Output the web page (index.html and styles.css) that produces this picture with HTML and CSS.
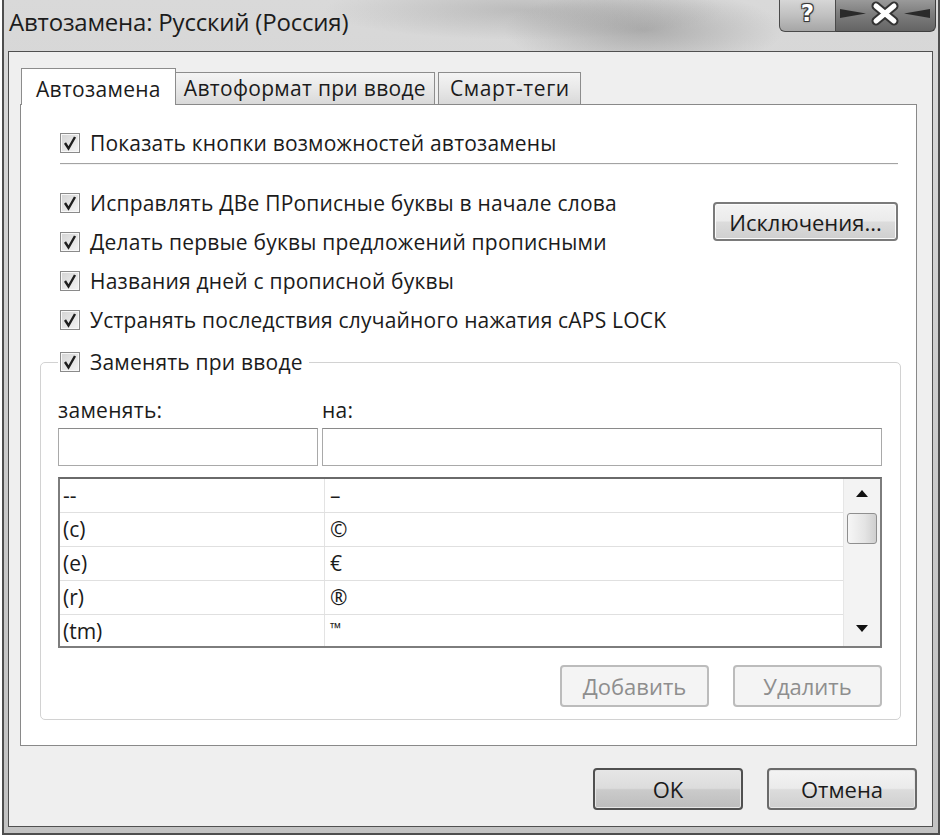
FILE: index.html
```html
<!DOCTYPE html>
<html lang="ru">
<head>
    <meta charset="UTF-8">
    <title>Автозамена: Русский (Россия)</title>
    <link rel="stylesheet" href="styles.css">
</head>
<body>
    <div class="window">
        <div class="titlebar">
            <div class="title">Автозамена: Русский (Россия)</div>
            <div class="caption">
                <div class="cap-help">?</div>
                <div class="cap-close">
                    <svg width="98" height="32" viewBox="0 0 98 32">
                        <polygon points="4,9 30,13.5 4,18" fill="#2a2a2a"/>
                        <polygon points="94,9 68,13.5 94,18" fill="#2a2a2a"/>
                        <path d="M40 6 L58 21 M58 6 L40 21" stroke="#333333" stroke-width="9" stroke-linecap="round"/>
                        <path d="M40 6 L58 21 M58 6 L40 21" stroke="#ffffff" stroke-width="5" stroke-linecap="round"/>
                    </svg>
                </div>
            </div>
        </div>

        <div class="client">
            <div class="tabs">
                <div class="tab active">Автозамена</div>
                <div class="tab">Автоформат при вводе</div>
                <div class="tab tab-gap">Смарт-теги</div>
            </div>

            <div class="panel">
                <div class="check row first">
                    <span class="box"><svg width="18" height="18" viewBox="0 0 18 18"><path d="M4 9 L7.5 14.5 L14 3" stroke="#1e1e1e" stroke-width="2.4" fill="none"/></svg></span>
                    Показать кнопки возможностей автозамены
                </div>
                <div class="sep"></div>

                <div class="opts">
                    <div class="opt-list">
                        <div class="check row">
                            <span class="box"><svg width="18" height="18" viewBox="0 0 18 18"><path d="M4 9 L7.5 14.5 L14 3" stroke="#1e1e1e" stroke-width="2.4" fill="none"/></svg></span>
                            Исправлять ДВе ПРописные буквы в начале слова
                        </div>
                        <div class="check row">
                            <span class="box"><svg width="18" height="18" viewBox="0 0 18 18"><path d="M4 9 L7.5 14.5 L14 3" stroke="#1e1e1e" stroke-width="2.4" fill="none"/></svg></span>
                            Делать первые буквы предложений прописными
                        </div>
                        <div class="check row">
                            <span class="box"><svg width="18" height="18" viewBox="0 0 18 18"><path d="M4 9 L7.5 14.5 L14 3" stroke="#1e1e1e" stroke-width="2.4" fill="none"/></svg></span>
                            Названия дней с прописной буквы
                        </div>
                        <div class="check row">
                            <span class="box"><svg width="18" height="18" viewBox="0 0 18 18"><path d="M4 9 L7.5 14.5 L14 3" stroke="#1e1e1e" stroke-width="2.4" fill="none"/></svg></span>
                            Устранять последствия случайного нажатия cAPS LOCK
                        </div>
                    </div>
                    <button class="btn btn-except">Исключения...</button>
                </div>

                <fieldset class="group">
                    <legend class="check legend">
                        <span class="box"><svg width="18" height="18" viewBox="0 0 18 18"><path d="M4 9 L7.5 14.5 L14 3" stroke="#1e1e1e" stroke-width="2.4" fill="none"/></svg></span>
                        Заменять при вводе
                    </legend>

                    <div class="fields">
                        <div class="field-label">заменять:</div>
                        <div class="field-label">на:</div>
                        <div class="input"></div>
                        <div class="input"></div>
                    </div>

                    <div class="list">
                        <div class="rows">
                            <div class="list-row"><span class="c1">--</span><span class="c2">–</span></div>
                            <div class="list-row"><span class="c1">(c)</span><span class="c2">©</span></div>
                            <div class="list-row"><span class="c1">(e)</span><span class="c2">€</span></div>
                            <div class="list-row"><span class="c1">(r)</span><span class="c2">®</span></div>
                            <div class="list-row"><span class="c1">(tm)</span><span class="c2 tm">™</span></div>
                        </div>
                        <div class="scrollbar">
                            <div class="arrow up"></div>
                            <div class="thumb"></div>
                            <div class="track"></div>
                            <div class="arrow down"></div>
                        </div>
                    </div>

                    <div class="list-btns">
                        <button class="btn disabled">Добавить</button>
                        <button class="btn disabled">Удалить</button>
                    </div>
                </fieldset>
            </div>

            <div class="dlg-btns">
                <button class="btn btn-main btn-ok">OK</button>
                <button class="btn btn-main">Отмена</button>
            </div>
        </div>
    </div>
</body>
</html>
```

FILE: styles.css
```css
body {
    margin: 0;
    background: #ffffff;
    font-family: 'Open Sans', 'Noto Sans', sans-serif;
    color: #1b1b1b;
}
.window {
    width: 938px;
    margin-left: 2px;
    box-sizing: border-box;
    border: 2px solid #4e4e4e;
    border-top: none;
    padding: 0 5px 6px 4px;
    background:
        radial-gradient(ellipse 140px 40px at 640px 30px, rgba(90, 90, 90, 0.35), transparent),
        radial-gradient(ellipse 200px 30px at 520px 10px, rgba(120, 120, 120, 0.3), transparent),
        linear-gradient(180deg, #d9d9d9 0%, #c9c9c9 60%, #c2c2c2 100%);
}
.titlebar {
    height: 51px;
    display: flex;
    justify-content: space-between;
    align-items: flex-start;
}
.title {
    font-size: 24px;
    line-height: 26px;
    padding: 9px 0 0 1px;
    color: #1c1c1c;
    letter-spacing: -0.2px;
}
.caption {
    display: flex;
    margin-right: -3px;
}
.cap-help {
    width: 57px;
    height: 32px;
    box-sizing: border-box;
    border: 1px solid #4a4a4a;
    border-top: none;
    border-radius: 0 0 0 6px;
    background: linear-gradient(180deg, #d6d6d6 0%, #c0c0c0 50%, #a6a6a6 100%);
    color: #ffffff;
    font-family: 'DejaVu Sans', sans-serif;
    font-weight: bold;
    font-size: 23px;
    line-height: 27px;
    text-align: center;
    text-shadow: 1px 1px 0 #3a3a3a, -1px -1px 0 #3a3a3a, 1px -1px 0 #3a3a3a, -1px 1px 0 #3a3a3a, 0 0 3px #3a3a3a;
}
.cap-close {
    width: 100px;
    height: 32px;
    box-sizing: border-box;
    border: 1px solid #3e3e3e;
    border-left: none;
    border-top: none;
    border-radius: 0 0 6px 0;
    background: linear-gradient(180deg, #9a9a9a 0%, #7d7d7d 45%, #646464 100%);
}
.cap-close svg {
    display: block;
}
.client {
    border: 1px solid #505050;
    background: #efefef;
    padding: 16px 15px 16px 11px;
}
.tabs {
    display: flex;
    align-items: flex-end;
    height: 36px;
    padding-left: 1px;
}
.tab {
    height: 32px;
    box-sizing: border-box;
    padding: 0 8px;
    border: 1px solid #8c8c8c;
    border-bottom: none;
    border-left: none;
    background: linear-gradient(180deg, #f4f4f4 0%, #e8e8e8 50%, #d9d9d9 100%);
    font-size: 21px;
    letter-spacing: 0.3px;
    line-height: 31px;
    white-space: nowrap;
}
.tab.active {
    height: 37px;
    margin-bottom: -1px;
    padding: 0 14px;
    border-left: 1px solid #8c8c8c;
    background: #ffffff;
    line-height: 40px;
    position: relative;
    z-index: 1;
}
.tab-gap {
    margin-left: 3px;
    padding: 0 10px 0 11px;
    letter-spacing: 0.6px;
    border-left: 1px solid #8c8c8c;
}
.panel {
    height: 642px;
    box-sizing: border-box;
    border: 1px solid #898989;
    background: #ffffff;
    padding: 18px 15px 0 19px;
}
.check {
    display: flex;
    align-items: center;
    font-size: 21px;
    letter-spacing: 0.2px;
    white-space: nowrap;
}
.box {
    width: 20px;
    height: 20px;
    box-sizing: border-box;
    border: 1px solid #8a8a8a;
    background: linear-gradient(135deg, #d4d4d4 0%, #f4f4f4 100%);
    box-shadow: inset 0 0 0 1px #f8f8f8;
    margin-right: 10px;
    flex: none;
    display: flex;
    align-items: center;
    justify-content: center;
}
.box svg {
    display: block;
}
.row {
    height: 39px;
    padding-left: 20px;
}
.row.first {
    height: 40px;
}
.sep {
    height: 1px;
    background: #a3a3a3;
    border-bottom: 1px solid #f4f4f4;
    margin: 0 3px 0 20px;
}
.opts {
    display: flex;
    justify-content: space-between;
    margin-top: 18px;
}
.btn {
    font-family: 'Open Sans', 'Noto Sans', sans-serif;
    font-size: 22px;
    color: #1b1b1b;
    border: 1px solid #6e6e6e;
    border-radius: 4px;
    background: linear-gradient(180deg, #f3f3f3 0%, #ebebeb 48%, #dcdcdc 52%, #cfcfcf 100%);
    box-shadow: inset 0 0 0 1px #fbfbfb;
    padding: 0;
}
.btn-except {
    width: 185px;
    height: 39px;
    margin: 19px 3px 0 0;
    border: 2px solid #7a7a7a;
}
.group {
    margin: 3px 0 0 0;
    border: 1px solid #d2d2d2;
    border-radius: 5px;
    padding: 0 18px 12px 17px;
    min-width: 0;
}
.legend {
    height: 40px;
    padding: 0 6px 0 2px;
}
.fields {
    display: grid;
    grid-template-columns: 260px 1fr;
    column-gap: 4px;
    margin-top: 16px;
}
.field-label {
    font-size: 21px;
    letter-spacing: 0.3px;
    line-height: 24px;
    margin-bottom: 6px;
}
.input {
    height: 38px;
    box-sizing: border-box;
    border: 1px solid #a9a9a9;
    border-top-color: #8a8a8a;
    background: #ffffff;
}
.list {
    display: flex;
    height: 171px;
    box-sizing: border-box;
    margin-top: 11px;
    border: 2px solid #7d7d7d;
    border-top-color: #6a6a6a;
    overflow: hidden;
}
.rows {
    flex: 1;
}
.list-row {
    display: flex;
    height: 34px;
    box-sizing: border-box;
    border-bottom: 1px solid #e0e0e0;
    font-size: 21px;
    line-height: 33px;
}
.c1 {
    width: 265px;
    padding-left: 3px;
    box-sizing: border-box;
    border-right: 1px solid #e3e3e3;
}
.c2 {
    padding-left: 5px;
}
.tm {
    font-size: 15px;
    line-height: 26px;
}
.scrollbar {
    width: 36px;
    display: flex;
    flex-direction: column;
    align-items: center;
    background: #f3f3f3;
    border-left: 1px solid #e6e6e6;
}
.arrow {
    width: 0;
    height: 0;
    border-left: 6px solid transparent;
    border-right: 6px solid transparent;
}
.arrow.up {
    margin-top: 11px;
    border-bottom: 7px solid #111111;
}
.thumb {
    width: 30px;
    height: 31px;
    margin-top: 16px;
    box-sizing: border-box;
    border: 1px solid #8f8f8f;
    border-radius: 3px;
    background: linear-gradient(90deg, #f6f6f6 0%, #e4e4e4 60%, #cfcfcf 100%);
}
.track {
    flex: 1;
}
.arrow.down {
    margin-bottom: 14px;
    border-top: 7px solid #111111;
}
.list-btns {
    display: flex;
    justify-content: flex-end;
    gap: 24px;
    margin-top: 17px;
}
.btn.disabled {
    width: 149px;
    height: 42px;
    background: #f4f4f4;
    border: 2px solid #bcbcbc;
    color: #8e8e8e;
    box-shadow: none;
}
.dlg-btns {
    display: flex;
    justify-content: flex-end;
    gap: 24px;
    margin-top: 22px;
}
.btn-main {
    width: 150px;
    height: 42px;
    border: 2px solid #6a6a6a;
    box-shadow: inset 0 0 0 1px #e6e6e6;
}
.btn-ok {
    border-color: #505050;
    background: linear-gradient(180deg, #e6e6e6 0%, #dcdcdc 48%, #cbcbcb 52%, #bdbdbd 100%);
}
```
